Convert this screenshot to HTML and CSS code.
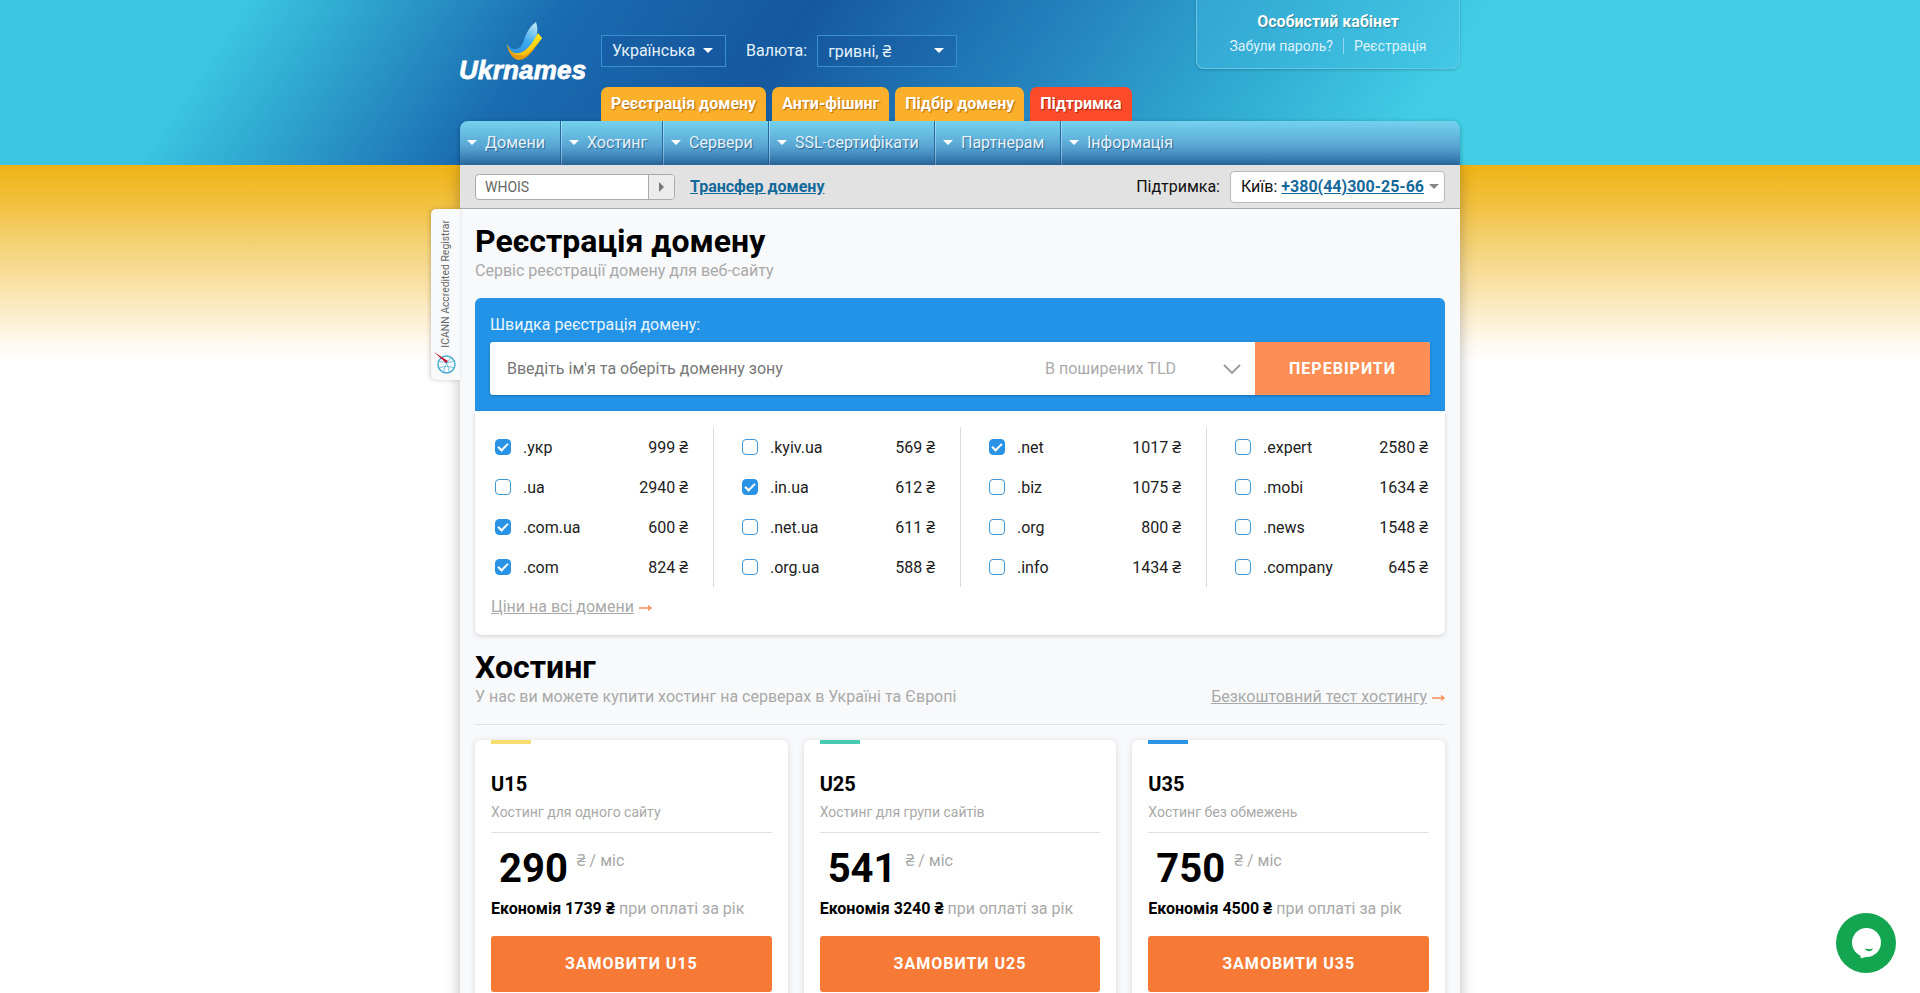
FILE: index.html
```html
<!doctype html>
<html lang="uk">
<head>
	<meta charset="UTF-8" />
	<title>Ukrnames - Реєстрація домену</title>
	<link rel="stylesheet" href="styles.css">
</head>
<body>

<div class="wrap">

	<div class="head">
		<a class="logo" href="#">
			<svg class="logo-mark" width="48" height="44" viewBox="0 0 48 44">
				<defs>
					<linearGradient id="swoosh-blue" x1="0.7" y1="0" x2="0.2" y2="1">
						<stop offset="0" stop-color="#b5e3f5"/>
						<stop offset="0.5" stop-color="#3ea9ee"/>
						<stop offset="1" stop-color="#2b8fe0"/>
					</linearGradient>
					<linearGradient id="swoosh-yellow" x1="1" y1="0" x2="0" y2="1">
						<stop offset="0" stop-color="#ffe81a"/>
						<stop offset="1" stop-color="#f7b90f"/>
					</linearGradient>
				</defs>
				<path d="M2 24 C3 32 8 39 14 39 C23 39 30 27 37 18 L30 14 C24 24 18 32 12 32 C8 32 4 29 2 24 Z" fill="url(#swoosh-yellow)"/>
				<path d="M2 24 C5 30 9 35 14 35 C22 35 27 25 34 17 L37 18 C30 27 23 40 14 40 C8 40 3 32 2 24 Z" fill="#e69a10"/>
				<path d="M31 2 C24 7 21 14 19 20 C17 26 14 29 10 29 C7 29 4 27 2 24 C4 30 9 34 14 34 C21 34 26 27 30 19 C33 14 33 8 31 2 Z" fill="url(#swoosh-blue)"/>
				<path d="M33 13 L37 18 C32 24 27 31 22 34 C17 37 12 35 9 33 C17 35 24 28 29 20 C31 17 32 15 33 13 Z" fill="url(#swoosh-yellow)"/>
			</svg>
			<span class="logo-text">Ukrnames</span>
		</a>
		<div class="head-main">
			<div class="head-selects">
				<div class="head-select lang">Українська<i class="caret"></i></div>
				<span class="head-label">Валюта:</span>
				<div class="head-select money">гривні, ₴<i class="caret"></i></div>
			</div>
			<div class="tabs">
				<a class="tab" href="#">Реєстрація домену</a>
				<a class="tab" href="#">Анти-фішинг</a>
				<a class="tab" href="#">Підбір домену</a>
				<a class="tab tab-red" href="#">Підтримка</a>
			</div>
		</div>
		<div class="account">
			<div class="account-title">Особистий кабінет</div>
			<div class="account-links">
				<a href="#">Забули пароль?</a>
				<a href="#">Реєстрація</a>
			</div>
		</div>
	</div>

	<div class="nav">
		<a class="nav-item item-1" href="#"><i class="caret"></i>Домени</a>
		<a class="nav-item item-2" href="#"><i class="caret"></i>Хостинг</a>
		<a class="nav-item item-3" href="#"><i class="caret"></i>Сервери</a>
		<a class="nav-item item-4" href="#"><i class="caret"></i>SSL-сертифікати</a>
		<a class="nav-item item-5" href="#"><i class="caret"></i>Партнерам</a>
		<a class="nav-item item-6" href="#"><i class="caret"></i>Інформація</a>
	</div>

	<div class="panel">
		<div class="side-tab">
			<span class="side-text">ICANN Accredited Registrar</span>
			<svg class="side-logo" width="24" height="24" viewBox="0 0 24 24">
				<circle cx="13.5" cy="13.5" r="8.5" fill="none" stroke="#3fa9cf" stroke-width="1.4"/>
				<path d="M6 10c5 2 10 2 15 0M6 17c5-2 10-2 15 0M9 7c4 4 7 8 7 14M18 7c-4 4-7 8-7 14" fill="none" stroke="#3fa9cf" stroke-width="0.7"/>
				<path d="M1 1 L15 10 L13 12 Z" fill="#c3122f"/>
			</svg>
		</div>

		<div class="toolbar">
			<div class="whois">
				<span class="whois-input">WHOIS</span>
				<span class="whois-go"><i class="caret-right"></i></span>
			</div>
			<a class="transfer" href="#">Трансфер домену</a>
			<span class="support-label">Підтримка:</span>
			<div class="support">Київ:<a href="#">+380(44)300-25-66</a><i class="caret caret-grey"></i></div>
		</div>

		<div class="content">
			<h1>Реєстрація домену</h1>
			<p class="lead">Сервіс реєстрації домену для веб-сайту</p>

			<div class="quick">
				<label class="quick-label">Швидка реєстрація домену:</label>
				<div class="quick-form">
					<span class="quick-input">Введіть ім'я та оберіть доменну зону</span>
					<span class="quick-zone">В поширених TLD</span>
					<svg class="quick-chevron" width="18" height="10" viewBox="0 0 18 10"><path d="M1 1l8 8 8-8" fill="none" stroke="#999" stroke-width="1.8"/></svg>
					<button class="quick-btn">ПЕРЕВІРИТИ</button>
				</div>
			</div>

			<div class="tlds">
				<div class="tld-grid">
					<div class="tld-col">
						<div class="tld"><i class="check on"></i><span class="tld-name">.укр</span><span class="tld-price">999 ₴</span></div>
						<div class="tld"><i class="check"></i><span class="tld-name">.ua</span><span class="tld-price">2940 ₴</span></div>
						<div class="tld"><i class="check on"></i><span class="tld-name">.com.ua</span><span class="tld-price">600 ₴</span></div>
						<div class="tld"><i class="check on"></i><span class="tld-name">.com</span><span class="tld-price">824 ₴</span></div>
					</div>
					<div class="tld-col">
						<div class="tld"><i class="check"></i><span class="tld-name">.kyiv.ua</span><span class="tld-price">569 ₴</span></div>
						<div class="tld"><i class="check on"></i><span class="tld-name">.in.ua</span><span class="tld-price">612 ₴</span></div>
						<div class="tld"><i class="check"></i><span class="tld-name">.net.ua</span><span class="tld-price">611 ₴</span></div>
						<div class="tld"><i class="check"></i><span class="tld-name">.org.ua</span><span class="tld-price">588 ₴</span></div>
					</div>
					<div class="tld-col">
						<div class="tld"><i class="check on"></i><span class="tld-name">.net</span><span class="tld-price">1017 ₴</span></div>
						<div class="tld"><i class="check"></i><span class="tld-name">.biz</span><span class="tld-price">1075 ₴</span></div>
						<div class="tld"><i class="check"></i><span class="tld-name">.org</span><span class="tld-price">800 ₴</span></div>
						<div class="tld"><i class="check"></i><span class="tld-name">.info</span><span class="tld-price">1434 ₴</span></div>
					</div>
					<div class="tld-col">
						<div class="tld"><i class="check"></i><span class="tld-name">.expert</span><span class="tld-price">2580 ₴</span></div>
						<div class="tld"><i class="check"></i><span class="tld-name">.mobi</span><span class="tld-price">1634 ₴</span></div>
						<div class="tld"><i class="check"></i><span class="tld-name">.news</span><span class="tld-price">1548 ₴</span></div>
						<div class="tld"><i class="check"></i><span class="tld-name">.company</span><span class="tld-price">645 ₴</span></div>
					</div>
				</div>
				<div class="all-prices"><a class="grey-link" href="#">Ціни на всі домени</a><svg class="arrow" width="13" height="8" viewBox="0 0 13 8"><path d="M0 4h12M9 1.500l3 2.500-3 2.500" fill="none" stroke="#f58d58" stroke-width="1.400"/></svg></div>
			</div>

			<h1 class="hosting-title">Хостинг</h1>
			<div class="hosting-sub">
				<p class="lead">У нас ви можете купити хостинг на серверах в Україні та Європі</p>
				<div><a class="grey-link" href="#">Безкоштовний тест хостингу</a><svg class="arrow" width="13" height="8" viewBox="0 0 13 8"><path d="M0 4h12M9 1.500l3 2.500-3 2.500" fill="none" stroke="#f58d58" stroke-width="1.400"/></svg></div>
			</div>

			<div class="plans">
				<div class="plan">
					<div class="plan-mark mark-yellow"></div>
					<div class="plan-name">U15</div>
					<div class="plan-desc">Хостинг для одного сайту</div>
					<div class="plan-price"><b>290</b><span>₴ / міс</span></div>
					<div class="plan-save"><b>Економія 1739 ₴</b> при оплаті за рік</div>
					<a class="plan-btn" href="#">ЗАМОВИТИ U15</a>
				</div>
				<div class="plan">
					<div class="plan-mark mark-teal"></div>
					<div class="plan-name">U25</div>
					<div class="plan-desc">Хостинг для групи сайтів</div>
					<div class="plan-price"><b>541</b><span>₴ / міс</span></div>
					<div class="plan-save"><b>Економія 3240 ₴</b> при оплаті за рік</div>
					<a class="plan-btn" href="#">ЗАМОВИТИ U25</a>
				</div>
				<div class="plan">
					<div class="plan-mark mark-blue"></div>
					<div class="plan-name">U35</div>
					<div class="plan-desc">Хостинг без обмежень</div>
					<div class="plan-price"><b>750</b><span>₴ / міс</span></div>
					<div class="plan-save"><b>Економія 4500 ₴</b> при оплаті за рік</div>
					<a class="plan-btn" href="#">ЗАМОВИТИ U35</a>
				</div>
			</div>
		</div>
	</div>
</div>

<a class="chat" href="#">
	<svg width="60" height="60" viewBox="0 0 60 60">
		<circle cx="30.500" cy="29.500" r="14.500" fill="#fff"/>
		<path d="M25 45.300L23 38l11 5z" fill="#fff"/>
		<path d="M29 35.500c2.500 1 5.500 1 8 0c-1 3.500-7 3.500-8 0z" fill="#13a550"/>
	</svg>
</a>

</body>
</html>
```

FILE: styles.css
```css
html, body{
	height: 100%;
	overflow: hidden;
}
body{
	margin: 0;
	padding: 0;
	font-size: 16px;
	font-family: Roboto, "Noto Sans", sans-serif;
	color: #111;
	background-color: #fff;
	background-image:
		linear-gradient(124deg, #3bc7e2 12%, #1a6bb0 28%, #15589f 40%, #2585bf 54%, #2ea4cf 62%, #42cfe6 74%),
		linear-gradient(#f0b315 165px, #f1bf3a 200px, #f5d47d 250px, #fbe7b8 300px, #fff8ec 340px, #fff 362px);
	background-size: 100% 165px, 100% 400px;
	background-repeat: no-repeat;
}
a{color: inherit;}
p, h1{margin: 0;}
i{font-style: normal;}

.wrap{
	position: relative;
	width: 1000px;
	margin: 0 auto;
}

/* header */
.head{
	display: flex;
	height: 121px;
}
.logo{
	width: 141px;
	display: flex;
	flex-direction: column;
	align-items: flex-start;
	text-decoration: none;
	padding-top: 20px;
	box-sizing: border-box;
}
.logo-mark{
	margin: 0 0 -8px 45px;
	flex: none;
}
.logo-text{
	font-family: "Liberation Sans", sans-serif;
	font-weight: bold;
	font-style: italic;
	font-size: 26px;
	line-height: 28px;
	letter-spacing: 0.2px;
	color: #fff;
	-webkit-text-stroke: 0.8px #fff;
	margin-left: -1px;
}
.head-main{
	padding-top: 35px;
}
.head-selects{
	display: flex;
	align-items: center;
	color: #e4f2fa;
}
.head-select{
	display: flex;
	align-items: center;
	justify-content: space-between;
	height: 32px;
	box-sizing: border-box;
	padding: 0 12px 1px 10px;
	border: 1px solid #3a8fd0;
	background: rgba(20, 80, 150, 0.25);
}
.head-select.lang{width: 125px;}
.head-select.money{width: 140px;}
.head-label{margin: 0 10px 1px 20px;}
.caret{
	display: inline-block;
	width: 0;
	height: 0;
	border-left: 5px solid transparent;
	border-right: 5px solid transparent;
	border-top: 5px solid #fff;
}
.tabs{
	display: flex;
	gap: 6px;
	margin-top: 20px;
}
.tab{
	display: block;
	height: 34px;
	line-height: 33px;
	padding: 0 10px;
	font-size: 16px;
	font-weight: bold;
	color: #fff;
	text-decoration: none;
	text-shadow: 1px 1px 1px rgba(120, 60, 0, 0.6);
	background: #fbb02b;
	border-radius: 7px 7px 0 0;
}
.tab-red{
	background: #fb4b2a;
	text-shadow: 1px 1px 1px rgba(100, 10, 0, 0.6);
}
.account{
	margin-left: auto;
	width: 264px;
	height: 69px;
	box-sizing: border-box;
	text-align: center;
	color: #fff;
	padding-top: 13px;
	border: 1px solid #63c8e8;
	border-top: 0;
	border-radius: 0 0 8px 8px;
	background: rgba(70, 190, 225, 0.35);
	box-shadow: 0 1px 3px rgba(0, 0, 0, 0.2);
}
.account-title{
	font-weight: bold;
	font-size: 16px;
	line-height: 18px;
	text-shadow: 1px 1px 1px rgba(0, 0, 0, 0.3);
}
.account-links{
	display: flex;
	justify-content: center;
	font-size: 14px;
	line-height: 16px;
	margin-top: 7px;
	color: #dff2fa;
}
.account-links a{text-decoration: none;}
.account-links a:first-child{
	padding-right: 10px;
	border-right: 1px solid #8fd6ee;
	margin-right: 10px;
}

/* main menu */
.nav{
	display: flex;
	height: 44px;
	border-radius: 8px 8px 0 0;
	background: linear-gradient(#74d2ee, #5aa8d4 55%, #2e73ad);
	box-shadow: 0 1px 5px rgba(0, 0, 0, 0.3);
}
.nav-item{
	display: flex;
	align-items: center;
	box-sizing: border-box;
	padding: 0 0 2px 7px;
	color: #e6f3fa;
	text-decoration: none;
	text-shadow: 1px 1px 1px rgba(0, 50, 100, 0.55);
	border-right: 1px solid #1f6aa8;
	box-shadow: 1px 0 0 rgba(255, 255, 255, 0.35);
}
.nav-item + .nav-item{padding-left: 8px;}
.nav-item .caret{margin-right: 8px;}
.item-1{width: 101px;}
.item-2{width: 102px;}
.item-3{width: 106px;}
.item-4{width: 166px;}
.item-5{width: 126px;}
.item-6{border-right: 0; box-shadow: none;}

/* panel */
.panel{
	position: relative;
	box-shadow: 0 0 14px rgba(0, 0, 0, 0.28);
}
.side-tab{
	position: absolute;
	left: -29px;
	top: 44px;
	width: 29px;
	height: 171px;
	background: #f8f9fb;
	border-radius: 5px 0 0 5px;
	box-shadow: -1px 0 4px rgba(0, 0, 0, 0.2);
	display: flex;
	flex-direction: column;
	align-items: center;
}
.side-text{
	writing-mode: vertical-rl;
	transform: rotate(180deg);
	font-size: 10.400px;
	line-height: 14px;
	color: #666;
	margin-top: 11px;
	white-space: nowrap;
}
.side-logo{
	margin-top: 3px;
	margin-left: -1px;
}
.toolbar{
	display: flex;
	align-items: center;
	height: 44px;
	box-sizing: border-box;
	padding: 0 15px;
	background: #e2e2e2;
	border-bottom: 1px solid #aaa;
}
.whois{
	display: flex;
	width: 200px;
	height: 26px;
	box-sizing: border-box;
	background: #fff;
	border: 1px solid #aaa;
	border-radius: 4px;
}
.whois-input{
	flex: 1;
	padding-left: 9px;
	font-size: 14px;
	line-height: 24px;
	color: #666;
}
.whois-go{
	display: flex;
	align-items: center;
	justify-content: center;
	width: 25px;
	background: #ececec;
	border-left: 1px solid #aaa;
	border-radius: 0 3px 3px 0;
}
.caret-right{
	width: 0;
	height: 0;
	border-top: 5px solid transparent;
	border-bottom: 5px solid transparent;
	border-left: 5px solid #777;
}
.transfer{
	margin-left: 15px;
	color: #14699b;
	font-weight: bold;
	font-size: 16px;
}
.support-label{
	margin-left: auto;
	margin-right: 10px;
}
.support{
	display: flex;
	align-items: center;
	gap: 4px;
	width: 215px;
	height: 32px;
	box-sizing: border-box;
	padding: 0 6px 0 10px;
	background: #fff;
	border: 1px solid #bbb;
	border-radius: 4px;
	white-space: pre;
}
.support a{
	color: #14699b;
	font-weight: bold;
}
.caret-grey{
	border-top-color: #888;
	margin-left: 1px;
}

/* content */
.content{
	background: #f8f9fb;
	padding: 12px 15px 40px 15px;
}
h1{
	font-size: 32px;
	line-height: 40px;
	font-weight: bold;
	color: #000;
}
.lead{
	font-size: 16px;
	line-height: 20px;
	color: #a9a9a9;
}
.quick{
	margin-top: 17px;
	padding: 16px 15px 15px 15px;
	height: 113px;
	box-sizing: border-box;
	background: #2393e8;
	border-radius: 6px 6px 0 0;
	color: #e9f5fd;
}
.quick-label{
	display: block;
	line-height: 22px;
	margin-bottom: 6px;
}
.quick-form{
	display: flex;
	align-items: center;
	height: 53px;
	background: #fff;
	border-radius: 3px;
	box-shadow: 0 1px 3px rgba(0, 0, 0, 0.25);
}
.quick-input{
	flex: 1;
	padding-left: 17px;
	color: #777;
}
.quick-zone{
	color: #aaa;
	margin-right: 47px;
}
.quick-chevron{margin-right: 14px;}
.quick-btn{
	width: 175px;
	height: 53px;
	border: 0;
	border-radius: 0 3px 3px 0;
	background: #fd8f56;
	color: #fff;
	font-family: Roboto, sans-serif;
	font-weight: bold;
	font-size: 16px;
	letter-spacing: 1px;
}

/* domain zones */
.tlds{
	background: #fff;
	border-radius: 0 0 6px 6px;
	box-shadow: 0 1px 4px rgba(0, 0, 0, 0.18);
	padding: 16px 0 18px 0;
}
.tld-grid{
	display: grid;
	grid-template-columns: 239px 247px 246px 1fr;
}
.tld-col{
	padding: 0 25px 0 28px;
	border-right: 1px solid #d8dde0;
}
.tld-col:first-child{padding-left: 20px;}
.tld-col:last-child{
	border-right: 0;
	padding-right: 17px;
}
.tld{
	display: flex;
	align-items: center;
	height: 40px;
	color: #222;
}
.tld-price{margin-left: auto;}
.check{
	position: relative;
	width: 16px;
	height: 16px;
	box-sizing: border-box;
	margin-right: 12px;
	background: #fff;
	border: 1px solid #3d97d9;
	border-radius: 4px;
}
.check.on{
	background: #2a93e6;
	border-color: #2a93e6;
}
.check.on::after{
	content: "";
	position: absolute;
	left: 4px;
	top: 1px;
	width: 4px;
	height: 8px;
	border: solid #fff;
	border-width: 0 2.500px 2.500px 0;
	transform: rotate(45deg);
}
.all-prices{
	margin: 10px 0 0 16px;
	line-height: 20px;
}
.grey-link{color: #a9a9a9;}
.arrow{margin-left: 5px;}

/* hosting */
.hosting-title{margin-top: 12px;}
.hosting-sub{
	display: flex;
	justify-content: space-between;
	line-height: 20px;
	padding-bottom: 17px;
	border-bottom: 1px solid #dfe2e5;
}
.plans{
	display: grid;
	grid-template-columns: 1fr 1fr 1fr;
	gap: 16px;
	margin-top: 15px;
}
.plan{
	padding: 0 16px 20px 16px;
	background: #fff;
	border-radius: 6px;
	box-shadow: 0 1px 6px rgba(0, 0, 0, 0.13);
}
.plan-mark{
	width: 40px;
	height: 4px;
}
.mark-yellow{background: #f7dc6f;}
.mark-teal{background: #48c9b0;}
.mark-blue{background: #2a93e6;}
.plan-name{
	margin-top: 28px;
	font-size: 20px;
	line-height: 24px;
	font-weight: bold;
	color: #000;
}
.plan-desc{
	margin-top: 7px;
	padding-bottom: 11px;
	font-size: 14px;
	line-height: 18px;
	color: #a9a9a9;
	border-bottom: 1px solid #dfe2e5;
}
.plan-price{
	display: flex;
	align-items: flex-start;
	margin-top: 14px;
	padding-left: 8px;
}
.plan-price b{
	font-size: 40px;
	line-height: 44px;
	color: #000;
}
.plan-price span{
	margin: 5px 0 0 9px;
	font-size: 16px;
	line-height: 18px;
	color: #a9a9a9;
}
.plan-save{
	margin-top: 8px;
	line-height: 20px;
	color: #a9a9a9;
}
.plan-save b{color: #000;}
.plan-btn{
	display: block;
	margin-top: 17px;
	height: 56px;
	line-height: 56px;
	text-align: center;
	color: #fff;
	font-weight: bold;
	letter-spacing: 1px;
	text-decoration: none;
	background: #f67a35;
	border-radius: 3px;
}

/* chat bubble */
.chat{
	position: fixed;
	right: 24px;
	bottom: 20px;
	width: 60px;
	height: 60px;
	border-radius: 50%;
	background: #13a550;
}
.chat svg{display: block;}
```
